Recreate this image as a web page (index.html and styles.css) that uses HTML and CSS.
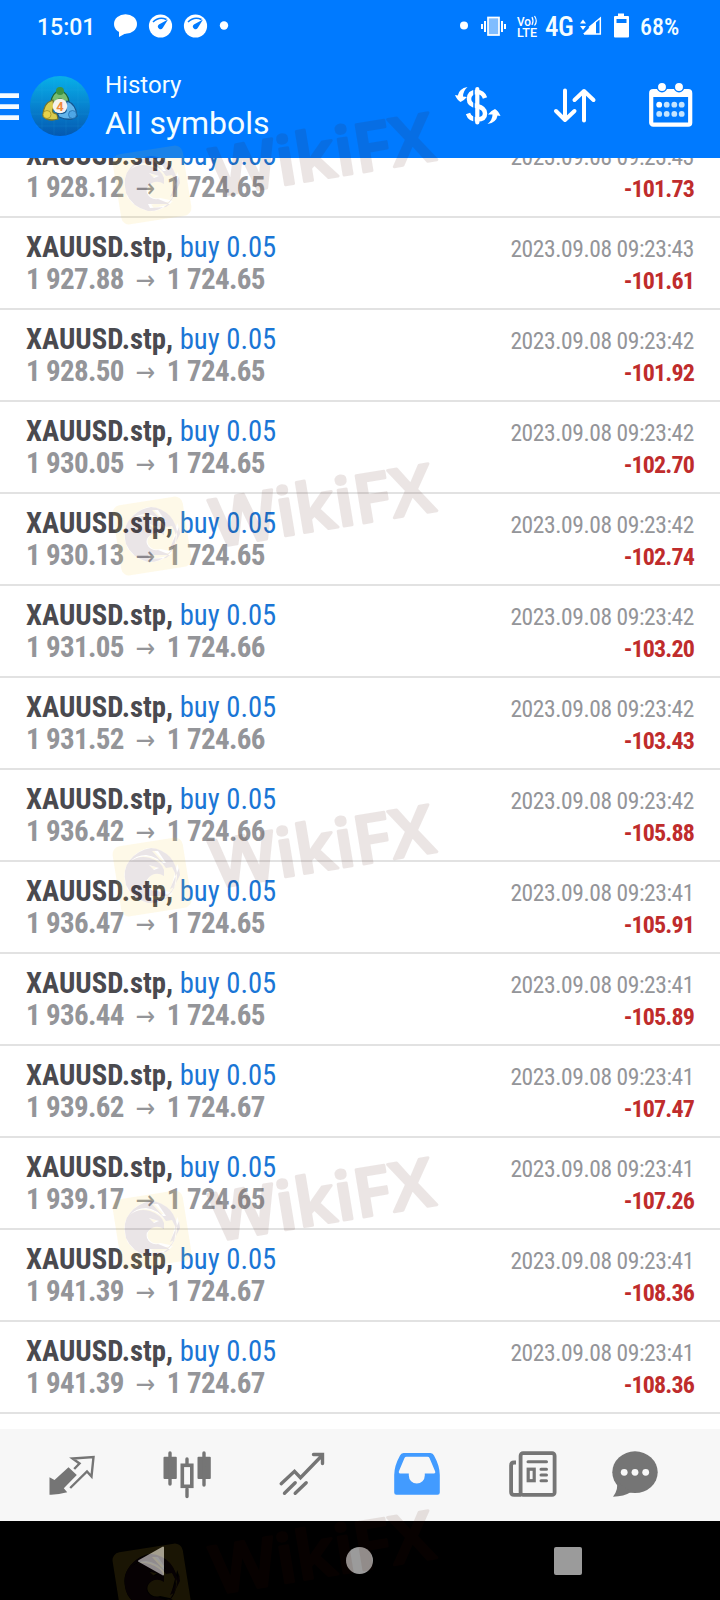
FILE: index.html
```html
<!DOCTYPE html>
<html lang="en">
<head>
  <meta charset="UTF-8">
  <meta name="viewport" content="width=device-width, initial-scale=1.0">
  <title>History</title>
  <link rel="stylesheet" href="styles.css">
</head>
<body>
  <div class="screen">
    <header class="header">
      <div class="status">
        <span class="clock">15:01</span>
        <svg class="status-left" width="120" height="30" viewBox="0 0 120 30">
          <ellipse cx="15.5" cy="13" rx="11.5" ry="9.8" fill="#fff"/>
          <path d="M9 19L9 26L18 21Z" fill="#fff"/>
          <g id="gauge">
            <circle cx="50.5" cy="15" r="11.6" fill="#fff"/>
            <path d="M43 11Q49 5 56.500 8.500" fill="none" stroke="#007aff" stroke-width="1.600"/>
            <path d="M58 8.500L52.700 17A2.600 2.600 0 1 1 48.900 13.500Z" fill="#007aff"/>
          </g>
          <use href="#gauge" x="35"/>
          <circle cx="114" cy="14.5" r="4.200" fill="#fff"/>
        </svg>
        <svg class="status-mid" width="84" height="30" viewBox="0 0 84 30" fill="#fff">
          <circle cx="8" cy="14.5" r="4"/>
          <rect x="32" y="6.500" width="11" height="17.500" fill="#80bdff" stroke="#fff" stroke-width="1.700"/>
          <path d="M25 13h2v5h-2zM28 10h2v11h-2zM45 10h2v11h-2zM48 13h2v5h-2z"/>
          <text class="volte" x="61" y="14.500" textLength="14" lengthAdjust="spacingAndGlyphs">Vo</text>
          <path d="M76 6Q78 10 76 14M78.500 5Q82 10 78.500 14.500" fill="none" stroke="#fff" stroke-width="1.200"/>
          <text class="volte lte" x="61" y="26" textLength="20" lengthAdjust="spacingAndGlyphs">LTE</text>
        </svg>
        <span class="network">4G</span>
        <svg class="status-right" width="52" height="30" viewBox="0 0 52 30" fill="#fff">
          <path d="M1 12.500L4 8.500L7 12.500ZM1 15H7L4 19Z"/>
          <path d="M4 23L17 10V23Z"/>
          <path d="M10 16.500L21.300 7V23H5" fill="none" stroke="#fff" stroke-width="1.500"/>
          <path d="M39 2.500h6v2.500h4q1 0 1 1V25.500q0 1-1 1H36q-1 0-1-1V6q0-1 1-1h3z"/>
          <rect x="37.500" y="8" width="10" height="4" fill="#007aff"/>
        </svg>
        <span class="battery">68%</span>
      </div>
      <div class="appbar">
        <svg width="19" height="30" viewBox="0 0 19 30" fill="#f4fbff">
          <path d="M0 1.300h19v4.800H0zM0 12.300h19v4.800H0zM0 23.300h19v4.800H0z"/>
        </svg>
        <svg class="avatar" width="60" height="60" viewBox="0 0 60 60">
          <defs>
            <linearGradient id="sea" x1="0" y1="0" x2="0" y2="1">
              <stop offset="0" stop-color="#08b0e8"/>
              <stop offset=".5" stop-color="#0783cf"/>
              <stop offset="1" stop-color="#0458b0"/>
            </linearGradient>
          </defs>
          <circle cx="30" cy="30" r="30" fill="url(#sea)"/>
          <path d="M12 6v48M24 1v58M36 1v58M48 6v48M6 14h48M1 26h58M1 38h58M6 50h48" stroke="#3dc0ef" stroke-opacity=".2" stroke-width=".6"/>
          <g stroke-linejoin="round">
            <path d="M30 14Q38 17 39 26L34 27Q30 19 26 27L21 26Q22 17 30 14Z" fill="#78bd70" stroke="#1c6238" stroke-width="1.300"/>
            <path d="M23 24Q13 27 13 40Q18 46 28 43L27 38Q20 37 24 31Z" fill="#d8cb4e" stroke="#77752a" stroke-width="1.300"/>
            <path d="M37 25Q46 28 47 40Q41 46 29 41L27 37Q38 39 36 31Z" fill="#62b4ea" stroke="#155690" stroke-width="1.300"/>
          </g>
          <circle cx="30" cy="15" r="4" fill="#3d9442"/>
          <circle cx="17" cy="38.500" r="4" fill="#e8d24a" stroke="#9a8726" stroke-width=".7"/>
          <circle cx="42.500" cy="38.500" r="4" fill="#4ea6e6" stroke="#1d68a8" stroke-width=".7"/>
          <circle cx="30" cy="30" r="7.300" fill="#f6f2ee"/>
          <text class="four" x="30" y="34.500" text-anchor="middle">4</text>
        </svg>
        <div class="titles">
          <div class="title">History</div>
          <div class="subtitle">All symbols</div>
        </div>
        <svg class="action" width="56" height="50" viewBox="0 0 56 50" fill="#fff">
          <path d="M35 18Q33 12 27 12Q19 12 19 19Q19 25 27 26Q35 28 35 33.500Q35 39.500 27 39.500Q20 39.500 18 33.500" fill="none" stroke="#fff" stroke-width="4.500"/>
          <path d="M24 7v37" stroke="#007aff" stroke-width="1.500"/>
          <path d="M27.300 9v33.500" stroke="#fff" stroke-width="4.200" stroke-linecap="round"/>
          <path d="M17.500 7Q9 8.500 7.800 15.500L5 15Q7 20 10.500 22Q14 20.500 17 17L13 16.500Q13 11 17.500 7Z"/>
          <path d="M37.500 44Q46.500 42.500 47.500 35.500L50.500 36Q48.500 31 45 29Q41 30.500 38 34.500L42.500 34.500Q42.500 40 37.500 44Z"/>
        </svg>
        <svg class="action" width="50" height="50" viewBox="0 0 50 50" fill="none" stroke="#fff" stroke-width="4" stroke-linecap="round" stroke-linejoin="round">
          <path d="M15 10.500V40M6 31L15 40L24.500 31"/>
          <path d="M34 40.500V11M24.500 20L34 11L43.500 20"/>
        </svg>
        <svg class="action calendar" width="52" height="50" viewBox="0 0 52 50">
          <rect x="6.200" y="11.200" width="39" height="33.500" rx="2" fill="none" stroke="#fff" stroke-width="4.200"/>
          <path d="M6 11h39v6H6z" fill="#fff"/>
          <g fill="#fff" stroke="#007aff" stroke-width="1.500">
            <circle cx="17" cy="7" r="4.700"/>
            <circle cx="34" cy="7" r="4.700"/>
          </g>
          <g fill="#c4e4ff">
            <circle cx="14.200" cy="24.700" r="2.900" fill="#fff"/><circle cx="21.700" cy="24.700" r="2.900"/><circle cx="29.300" cy="24.700" r="2.900"/><circle cx="36.700" cy="24.700" r="2.900"/>
            <circle cx="14.200" cy="33.900" r="2.900"/><circle cx="21.700" cy="33.900" r="2.900"/><circle cx="29.300" cy="33.900" r="2.900"/><circle cx="36.700" cy="33.900" r="2.900"/>
          </g>
        </svg>
      </div>
    </header>

    <main class="list">
      <div class="deal">
        <div class="line"><span class="symbol">XAUUSD.stp, <span class="side">buy 0.05</span></span><span class="time">2023.09.08 09:23:43</span></div>
        <div class="line"><span class="price">1 928.12<i>→</i>1 724.65</span><span class="profit">-101.73</span></div>
      </div>
      <div class="deal">
        <div class="line"><span class="symbol">XAUUSD.stp, <span class="side">buy 0.05</span></span><span class="time">2023.09.08 09:23:43</span></div>
        <div class="line"><span class="price">1 927.88<i>→</i>1 724.65</span><span class="profit">-101.61</span></div>
      </div>
      <div class="deal">
        <div class="line"><span class="symbol">XAUUSD.stp, <span class="side">buy 0.05</span></span><span class="time">2023.09.08 09:23:42</span></div>
        <div class="line"><span class="price">1 928.50<i>→</i>1 724.65</span><span class="profit">-101.92</span></div>
      </div>
      <div class="deal">
        <div class="line"><span class="symbol">XAUUSD.stp, <span class="side">buy 0.05</span></span><span class="time">2023.09.08 09:23:42</span></div>
        <div class="line"><span class="price">1 930.05<i>→</i>1 724.65</span><span class="profit">-102.70</span></div>
      </div>
      <div class="deal">
        <div class="line"><span class="symbol">XAUUSD.stp, <span class="side">buy 0.05</span></span><span class="time">2023.09.08 09:23:42</span></div>
        <div class="line"><span class="price">1 930.13<i>→</i>1 724.65</span><span class="profit">-102.74</span></div>
      </div>
      <div class="deal">
        <div class="line"><span class="symbol">XAUUSD.stp, <span class="side">buy 0.05</span></span><span class="time">2023.09.08 09:23:42</span></div>
        <div class="line"><span class="price">1 931.05<i>→</i>1 724.66</span><span class="profit">-103.20</span></div>
      </div>
      <div class="deal">
        <div class="line"><span class="symbol">XAUUSD.stp, <span class="side">buy 0.05</span></span><span class="time">2023.09.08 09:23:42</span></div>
        <div class="line"><span class="price">1 931.52<i>→</i>1 724.66</span><span class="profit">-103.43</span></div>
      </div>
      <div class="deal">
        <div class="line"><span class="symbol">XAUUSD.stp, <span class="side">buy 0.05</span></span><span class="time">2023.09.08 09:23:42</span></div>
        <div class="line"><span class="price">1 936.42<i>→</i>1 724.66</span><span class="profit">-105.88</span></div>
      </div>
      <div class="deal">
        <div class="line"><span class="symbol">XAUUSD.stp, <span class="side">buy 0.05</span></span><span class="time">2023.09.08 09:23:41</span></div>
        <div class="line"><span class="price">1 936.47<i>→</i>1 724.65</span><span class="profit">-105.91</span></div>
      </div>
      <div class="deal">
        <div class="line"><span class="symbol">XAUUSD.stp, <span class="side">buy 0.05</span></span><span class="time">2023.09.08 09:23:41</span></div>
        <div class="line"><span class="price">1 936.44<i>→</i>1 724.65</span><span class="profit">-105.89</span></div>
      </div>
      <div class="deal">
        <div class="line"><span class="symbol">XAUUSD.stp, <span class="side">buy 0.05</span></span><span class="time">2023.09.08 09:23:41</span></div>
        <div class="line"><span class="price">1 939.62<i>→</i>1 724.67</span><span class="profit">-107.47</span></div>
      </div>
      <div class="deal">
        <div class="line"><span class="symbol">XAUUSD.stp, <span class="side">buy 0.05</span></span><span class="time">2023.09.08 09:23:41</span></div>
        <div class="line"><span class="price">1 939.17<i>→</i>1 724.65</span><span class="profit">-107.26</span></div>
      </div>
      <div class="deal">
        <div class="line"><span class="symbol">XAUUSD.stp, <span class="side">buy 0.05</span></span><span class="time">2023.09.08 09:23:41</span></div>
        <div class="line"><span class="price">1 941.39<i>→</i>1 724.67</span><span class="profit">-108.36</span></div>
      </div>
      <div class="deal">
        <div class="line"><span class="symbol">XAUUSD.stp, <span class="side">buy 0.05</span></span><span class="time">2023.09.08 09:23:41</span></div>
        <div class="line"><span class="price">1 941.39<i>→</i>1 724.67</span><span class="profit">-108.36</span></div>
      </div>
    </main>

    <nav class="tabs">
      <!-- quotes -->
      <svg width="48" height="48" viewBox="0 0 48 48">
        <path d="M1.500 26.300L6.500 29L20.500 16.300L28.800 24L15.800 37.300L19.200 41.300Q10 44 1.500 43.700Z" fill="#757575"/>
        <path d="M26.200 18L31.500 12.500L24.500 7.500L45.500 6L43.500 25.500L39 20.500L22.200 37" fill="none" stroke="#757575" stroke-width="2.400"/>
      </svg>
      <!-- chart -->
      <svg width="48" height="48" viewBox="0 0 48 48">
        <g fill="#757575">
          <rect x=".5" y="5.700" width="13.300" height="22.300" rx="1"/>
          <rect x="34.500" y="5.700" width="13.300" height="22.300" rx="1"/>
        </g>
        <path d="M7 2v31M41 2v32M24 8v6M24 38v7.500" stroke="#757575" stroke-width="3.400" stroke-linecap="round"/>
        <rect x="19.300" y="14.300" width="9.500" height="21" fill="none" stroke="#757575" stroke-width="3.600"/>
      </svg>
      <!-- trade -->
      <svg width="48" height="48" viewBox="0 0 48 48" fill="none" stroke="#757575" stroke-width="3.400" stroke-linecap="round">
        <path d="M3.200 32.700L16.500 20.300L22.500 26.700L44.500 4M35.500 3.500H44.500V12.500M6.500 42.300L17.200 31.700M17.200 42.300L28.200 31.700"/>
      </svg>
      <!-- history -->
      <svg width="48" height="48" viewBox="0 0 48 48">
        <path fill-rule="evenodd" fill="#429bff" d="M10.500 2H37.500Q40 2 41 4.500Q46.800 15 46.800 24V41.500Q46.800 43.700 44.600 43.700H3.400Q1.200 43.700 1.200 41.500V24Q1.200 15 7 4.500Q8 2 10.500 2ZM13.500 5.800Q12 5.800 11.500 7L5.800 20.500Q5.500 22.500 7 22.500H15.800V24.500A8 8 0 0 0 31.800 24.500V22.500H41Q42.800 22.500 42.200 20.500L36.500 7Q36 5.800 34.500 5.800Z"/>
      </svg>
      <!-- news -->
      <svg width="50" height="48" viewBox="0 0 50 48" fill="none" stroke="#757575" stroke-width="3.800">
        <path d="M9 11.500H7Q4.100 11.500 4.100 14.500V41Q4.100 43.900 7 43.900H14"/>
        <rect x="13.600" y="2.200" width="34" height="41.700" rx="2.500"/>
        <path d="M21 10.800H39.500M34 18.300H39.500M34 24H39.500M34 29.700H39.500" stroke-width="3" stroke-linecap="round"/>
        <rect x="21.200" y="18.200" width="6" height="11.500" stroke-width="3.200"/>
      </svg>
      <!-- messages -->
      <svg width="48" height="48" viewBox="0 0 48 48">
        <ellipse cx="24" cy="21.200" rx="22.700" ry="20.900" fill="#757575"/>
        <path d="M5.500 30Q8 38 2 45.700Q13 45.500 20 41Z" fill="#757575"/>
        <g fill="#f7f7f7"><circle cx="13.200" cy="21.300" r="3.400"/><circle cx="24" cy="21.300" r="3.400"/><circle cx="34.700" cy="21.300" r="3.400"/></g>
      </svg>
    </nav>

    <div class="navbar">
      <svg width="30" height="32" viewBox="0 0 30 32"><path d="M3 16L27 2.500V29.500Z" fill="#9b9b9b" stroke="#9b9b9b" stroke-width="2" stroke-linejoin="round"/></svg>
      <span class="home"></span>
      <span class="recent"></span>
    </div>

    <svg class="mark mark-1" width="340" height="130" viewBox="0 0 340 130">
      <defs>
        <mask id="cut">
          <rect width="100" height="130" fill="#fff"/>
          <use href="#eagle" fill="#000"/>
        </mask>
        <g id="brand">
          <rect x="8.500" y="44.500" width="71" height="71" rx="8" transform="rotate(-9 44 80)" fill="#fac828" mask="url(#cut)"/>
          <g fill="#3c0a1e">
            <path id="eagle" fill-rule="evenodd" d="M43 51A27.500 27.500 0 1 1 40 106Q24 102 18 88Q14 72 22 63Q30 53 43 51ZM44 54L55 66L58 66L50 54ZM22 65Q30 58 42 61Q54 65 56 73L56 79Q50 75 44 78Q37 82 39 88Q42 95 50 94L60 98Q70 88 67 76L64 70L58 71Q50 59 38 58Q28 58 22 65ZM41 68L51 71L46 73ZM71 71L62 92L66 90L72 78ZM40 99L62 99L58 102L42 103Z"/>
          </g>
          <text class="brand-text" x="107" y="91.500" textLength="225" lengthAdjust="spacingAndGlyphs" transform="rotate(-9.400 107 91.500)">WikiFX</text>
        </g>
      </defs>
      <use href="#brand"/>
    </svg>
    <svg class="mark mark-2" width="340" height="130" viewBox="0 0 340 130"><use href="#brand"/></svg>
    <svg class="mark mark-3" width="340" height="130" viewBox="0 0 340 130"><use href="#brand"/></svg>
    <svg class="mark mark-4" width="340" height="130" viewBox="0 0 340 130"><use href="#brand"/></svg>
    <svg class="mark mark-5" width="340" height="97" viewBox="0 0 340 97"><use href="#brand"/></svg>
  </div>
</body>
</html>
```
FILE: styles.css
```css
body {
  margin: 0;
  background: #fff;
  font-family: Roboto, "Liberation Sans", sans-serif;
}
svg {
  display: block;
  flex: none;
}
.screen {
  position: relative;
  display: flex;
  flex-direction: column;
  width: 720px;
  height: 1600px;
  overflow: hidden;
}
.header {
  flex: none;
  height: 158px;
  background: #007aff;
  color: #f4fdff;
}
.status {
  display: flex;
  align-items: center;
  height: 54px;
  box-sizing: border-box;
}
.clock {
  width: 60px;
  margin-left: 37px;
  font-size: 23px;
  font-weight: 500;
  white-space: nowrap;
}
.status-left {
  margin: -2px 0 0 13px;
}
.status-mid {
  margin: -2px 0 0 226px;
}
.network,
.battery {
  font-family: "Roboto Condensed", Roboto, sans-serif;
  font-stretch: 75%;
  white-space: nowrap;
}
.network {
  width: 34px;
  margin-left: 5px;
  font-size: 27px;
  font-weight: 500;
  letter-spacing: -0.5px;
}
.status-right {
  margin-top: -2px;
}
.battery {
  margin-left: 9px;
  font-size: 24px;
  font-weight: 500;
}
.volte {
  font-size: 12px;
  font-weight: 500;
}
.lte {
  font-size: 13px;
}
.appbar {
  display: flex;
  align-items: center;
  height: 104px;
}
.appbar > svg:first-child {
  margin-top: 2px;
}
.avatar {
  margin: -1px 15px 0 11px;
}
.four {
  font-size: 13px;
  font-weight: 700;
  fill: #f08a3c;
}
.titles {
  width: 345px;
  padding-top: 1px;
}
.title {
  font-size: 24px;
  line-height: 32px;
}
.subtitle {
  font-size: 32px;
  line-height: 44px;
}
.action {
  margin: -2px 44px 0 0;
}
.action + .action {
  margin-right: 45px;
}
.action.calendar {
  margin-right: 0;
}
.list {
  flex: none;
  height: 1271px;
  overflow: hidden;
  font-family: "Roboto Condensed", Roboto, sans-serif;
  font-stretch: 75%;
}
.deal {
  height: 92px;
  box-sizing: border-box;
  padding: 13px 26px 0;
  border-bottom: 2px solid #e2e2e2;
}
.deal:first-child {
  margin-top: -32px;
}
.line {
  display: flex;
  justify-content: space-between;
  align-items: baseline;
  height: 32px;
  line-height: 32px;
  white-space: nowrap;
}
.symbol {
  font-size: 28.7px;
  font-weight: 700;
  color: #4a4a4f;
}
.side {
  font-weight: 400;
  color: #1a76d6;
}
.price {
  font-size: 29px;
  font-weight: 700;
  letter-spacing: -0.65px;
  color: #949599;
}
.price i {
  display: inline-block;
  width: 43px;
  font-family: "DejaVu Sans", sans-serif;
  font-size: 26px;
  font-style: normal;
  font-weight: 400;
  line-height: 20px;
  text-align: center;
}
.time {
  font-size: 23.5px;
  letter-spacing: -0.4px;
  color: #949599;
}
.profit {
  font-size: 24px;
  font-weight: 700;
  letter-spacing: -0.85px;
  color: #bf2c2c;
}
.tabs {
  display: grid;
  grid-template-columns: repeat(5, 115px) 92px;
  justify-items: center;
  align-items: center;
  flex: none;
  height: 92px;
  padding-left: 14px;
  background: #f7f7f7;
}
.navbar {
  display: grid;
  grid-template-columns: repeat(3, 208.5px);
  justify-items: center;
  align-items: center;
  flex: none;
  height: 79px;
  padding-left: 47px;
  background: #000;
}
.home {
  width: 27px;
  height: 27px;
  border-radius: 50%;
  background: #9b9b9b;
}
.recent {
  width: 28px;
  height: 28px;
  border-radius: 2px;
  background: #9b9b9b;
}
/* diagonal brand marks laid over the whole screen */
.mark {
  position: absolute;
  left: 108px;
  opacity: 0.1;
  pointer-events: none;
}
.brand-text {
  font-family: "Open Sans", sans-serif;
  font-size: 67px;
  font-weight: 600;
  fill: #461000;
  stroke: #461000;
  stroke-width: 3px;
  stroke-linejoin: round;
}
.mark-1 {
  top: 105px;
}
.mark-2 {
  top: 456px;
}
.mark-3 {
  top: 797px;
}
.mark-4 {
  top: 1150px;
}
.mark-5 {
  top: 1503px;
}
```
